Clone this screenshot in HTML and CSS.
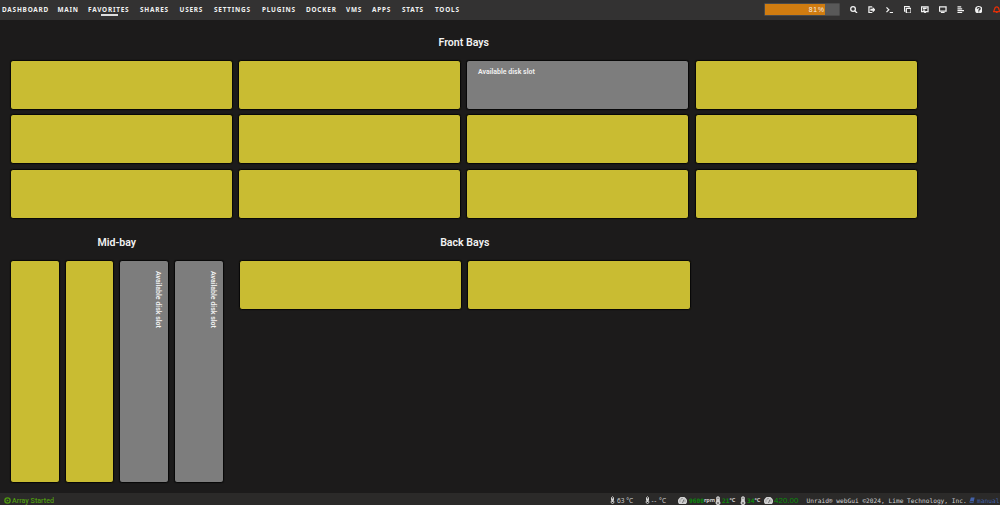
FILE: index.html
```
<!doctype html>
<html lang="en">
<head>
    <meta charset="UTF-8">
    <title>Favorites</title>
    <link rel="stylesheet" href="styles.css">
</head>
<body>
    <header class="header">
        <nav class="menu">
            <a>DASHBOARD</a>
            <a>MAIN</a>
            <a class="active">FAVORITES</a>
            <a>SHARES</a>
            <a>USERS</a>
            <a>SETTINGS</a>
            <a>PLUGINS</a>
            <a>DOCKER</a>
            <a>VMS</a>
            <a>APPS</a>
            <a>STATS</a>
            <a>TOOLS</a>
        </nav>
        <div class="usage"><div class="usage-bar" style="width: 81%">81%</div></div>
        <div class="tools">
            <svg viewBox="0 0 16 16"><circle cx="6.5" cy="6.5" r="5"/><path d="M10 10l5 5"/></svg>
            <svg viewBox="0 0 16 16"><path d="M9 2H2v12h7"/><path class="fill" d="M5 6h5V2l6 6-6 6v-4H5z"/></svg>
            <svg viewBox="0 0 16 16"><path d="M1 3l5 5-5 5M8 14h8"/></svg>
            <svg viewBox="0 0 16 16"><path d="M5 5h10v10H5zM3 11H1V1h10v2"/></svg>
            <svg viewBox="0 0 16 16"><path d="M1 2h14v10h-4l-3 3v-3H1zM4 5h8M4 9h5"/></svg>
            <svg viewBox="0 0 16 16"><path d="M1 2h14v9H1z"/><path d="M4 14h8"/></svg>
            <svg viewBox="0 0 16 16"><path d="M1 2h8M1 6h10M1 10h14M1 14h10"/></svg>
            <svg viewBox="0 0 16 16"><circle class="fill" cx="8" cy="8" r="8"/><path class="dark" d="M5 6c0-4 6-3 6 0 0 2-3 1.500-3 4M8 11.500v2"/></svg>
            <svg class="alert" viewBox="0 0 16 16"><path d="M1 12c3-2 1-10 7-10s4 8 7 10zM6 14h4"/></svg>
        </div>
    </header>
    <main class="layout">
        <section class="front">
            <h2>Front Bays</h2>
            <div class="bays">
                <div class="disk"></div>
                <div class="disk"></div>
                <div class="disk empty"><span>Available disk slot</span></div>
                <div class="disk"></div>
                <div class="disk"></div>
                <div class="disk"></div>
                <div class="disk"></div>
                <div class="disk"></div>
                <div class="disk"></div>
                <div class="disk"></div>
                <div class="disk"></div>
                <div class="disk"></div>
            </div>
        </section>
        <div class="lower">
            <section class="mid">
                <h2>Mid-bay</h2>
                <div class="bays">
                    <div class="disk"></div>
                    <div class="disk"></div>
                    <div class="disk empty"><span>Available disk slot</span></div>
                    <div class="disk empty"><span>Available disk slot</span></div>
                </div>
            </section>
            <section class="back">
                <h2>Back Bays</h2>
                <div class="bays">
                    <div class="disk"></div>
                    <div class="disk"></div>
                </div>
            </section>
        </div>
    </main>
    <footer class="footer">
        <span class="status"><svg viewBox="0 0 16 16"><circle cx="8" cy="8" r="6"/><path class="fill" d="M6 5l5 3-5 3z"/></svg>Array Started</span>
        <span class="temp"><svg viewBox="0 0 10 16"><path d="M3 9V3q2-3 4 0v6q3 5-2 6-5-1-2-6zM5 5v7"/></svg>63 °C</span>
        <span class="temp"><svg viewBox="0 0 10 16"><path d="M3 9V3q2-3 4 0v6q3 5-2 6-5-1-2-6zM5 5v7"/></svg><span class="dashes">--</span> °C</span>
        <span class="sensor"><svg class="gauge" viewBox="0 0 18 14"><path class="fill" d="M2 14a9 9 0 1 1 14 0z"/><path class="dark" d="M9 12l3-7M3 8h2M5 4l1 1M13 8h2M8 2v2"/></svg><b>9600</b>rpm</span>
        <span class="sensor"><svg class="thermo" viewBox="0 0 10 16"><path d="M3 9V3q2-3 4 0v6q3 5-2 6-5-1-2-6zM5 5v7"/></svg><b>21</b>°C</span>
        <span class="sensor"><svg class="thermo" viewBox="0 0 10 16"><path d="M3 9V3q2-3 4 0v6q3 5-2 6-5-1-2-6zM5 5v7"/></svg><b>34</b>°C</span>
        <span class="power"><svg class="gauge" viewBox="0 0 18 14"><path class="fill" d="M2 14a9 9 0 1 1 14 0z"/><path class="dark" d="M9 12l3-7M3 8h2M5 4l1 1M13 8h2M8 2v2"/></svg><i>420.00</i></span>
        <span class="copyright">Unraid® webGui ©2024, Lime Technology, Inc.</span>
        <a class="manual"><svg viewBox="0 0 16 16"><path class="fill" d="M5 1h10l-3 14H2q-2-2 0-4z"/><path class="dark" d="M3 12h9"/></svg>manual</a>
    </footer>
</body>
</html>
```
FILE: styles.css
```
* {
    box-sizing: border-box;
}
html, body {
    margin: 0;
    height: 100%;
    overflow: hidden;
}
body {
    display: flex;
    flex-direction: column;
    background: #1c1b1b;
    color: #f2f2f2;
    font-family: "Noto Sans", "Open Sans", sans-serif;
}
svg {
    flex: none;
    fill: none;
    stroke: currentColor;
    stroke-width: 2;
}
svg .fill {
    fill: currentColor;
    stroke: none;
}
svg .dark {
    stroke: #303030;
}
.header {
    display: flex;
    flex: none;
    height: 20px;
    background: #333232;
}
.menu {
    display: grid;
    grid-template-columns: 55.5px 30.5px 52px 39.5px 34.5px 48px 44px 40px 26px 30px 33px 30px;
    width: 763px;
    padding-left: 2px;
    font-size: 6.4px;
    font-weight: bold;
    letter-spacing: .8px;
    line-height: 19px;
    white-space: nowrap;
}
.menu a {
    color: #f2f2f2;
}
.menu .active::after {
    content: "";
    display: block;
    width: 17px;
    height: 1.5px;
    margin: -5px 0 0 12.5px;
    background: #ddd;
}
.usage {
    width: 76px;
    height: 13px;
    margin: 3px 0 0 2px;
    border: 1px solid #4a4a4a;
    border-radius: 1px;
    background: #595959;
}
.usage-bar {
    height: 100%;
    background: #d07c10;
    color: #f7eee2;
    font-family: "Liberation Sans", sans-serif;
    font-size: 6.8px;
    line-height: 11px;
    letter-spacing: .8px;
    text-align: right;
}
.tools {
    display: flex;
    align-items: center;
    gap: 10.3px;
    height: 19px;
    margin-left: 10.3px;
}
.tools svg {
    width: 7.5px;
    height: 7.5px;
    stroke-width: 2.7;
}
.tools .alert {
    color: #e22f08;
}
.layout {
    flex: 1;
    padding: 15px 0 0 10px;
}
h2 {
    margin: 0;
    height: 25px;
    padding-top: 1px;
    font-family: Roboto, sans-serif;
    font-size: 10.6px;
    line-height: 14px;
    font-weight: 600;
    text-align: center;
}
.front {
    width: 907.5px;
}
.bays {
    display: grid;
    gap: 4.4px 5.2px;
}
.front .bays {
    grid-template-columns: repeat(4, 1fr);
    grid-auto-rows: 50px;
}
.disk {
    border: 1px solid #080808;
    border-radius: 3px;
    background: #c9bc32;
    box-shadow: 0 0 1px #000;
}
.empty {
    padding: 6px 10.6px;
    background: #7d7d7d;
    font-family: Roboto, sans-serif;
    font-size: 7px;
    line-height: 10px;
    font-weight: 600;
}
.lower {
    display: flex;
    gap: 15.5px;
    margin-top: 16px;
}
.mid {
    width: 213.5px;
}
.mid .bays {
    grid-template-columns: repeat(4, 1fr);
    grid-template-rows: 223px;
    gap: 4.9px;
}
.mid .empty {
    padding: 10.6px 5px;
    writing-mode: vertical-rl;
}
.back {
    width: 451.5px;
}
.back .bays {
    grid-template-columns: repeat(2, 1fr);
    grid-auto-rows: 50px;
}
.footer {
    display: grid;
    grid-template-columns: 606px 34.5px 33.5px 37px 25px 24px 42.5px 162.5px 36px;
    flex: none;
    height: 12px;
    padding-left: 4px;
    background: #2b2a29;
    color: #d0d0d0;
    font-size: 6.5px;
    line-height: 13px;
    white-space: nowrap;
}
.footer > * {
    display: flex;
    align-items: center;
    height: 14px;
}
.footer svg {
    width: 5px;
    height: 8px;
    margin-right: 1px;
}
.footer .gauge {
    width: 9px;
    height: 7px;
    margin-right: 2px;
}
.footer .gauge .dark {
    stroke-width: 1.2;
}
.footer .status {
    color: #4f9a10;
    font-family: Roboto, sans-serif;
    font-size: 7.1px;
    font-weight: 500;
}
.footer .status svg {
    width: 7px;
    height: 7px;
    stroke-width: 3;
}
.footer .temp svg {
    margin-right: 2px;
}
.dashes {
    margin-right: 2px;
    letter-spacing: .7px;
}
.sensor {
    font-size: 5.5px;
    font-weight: bold;
}
.footer .thermo {
    width: 6px;
    height: 9px;
    stroke-width: 2.5;
}
.sensor b {
    color: #0a8a0a;
    font-family: "DejaVu Sans Mono", monospace;
    font-size: 6.2px;
}
.power i {
    margin-left: -1px;
    color: #089008;
    font: 8px "Liberation Sans", sans-serif;
}
.copyright, .manual {
    font-family: "DejaVu Sans Mono", monospace;
    font-size: 6.2px;
}
.manual {
    color: #4361a8;
}
.footer .manual svg {
    width: 6px;
    height: 6px;
    margin-right: 2px;
}
```
